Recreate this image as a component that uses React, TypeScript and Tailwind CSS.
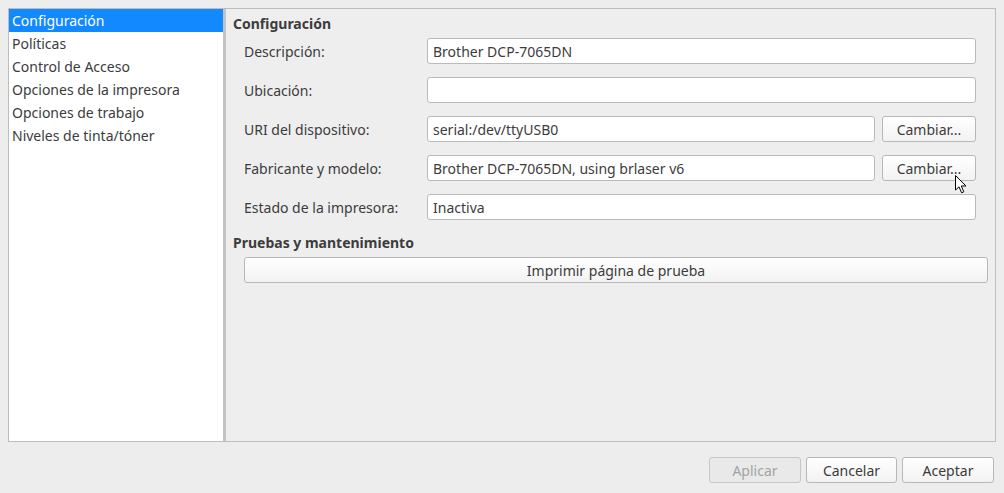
import React from 'react'

const items = [
  'Configuración',
  'Políticas',
  'Control de Acceso',
  'Opciones de la impresora',
  'Opciones de trabajo',
  'Niveles de tinta/tóner',
]

const rows = [
  { label: 'Descripción:', value: 'Brother DCP-7065DN', button: false },
  { label: 'Ubicación:', value: '', button: false },
  { label: 'URI del dispositivo:', value: 'serial:/dev/ttyUSB0', button: true },
  { label: 'Fabricante y modelo:', value: 'Brother DCP-7065DN, using brlaser v6', button: true },
  { label: 'Estado de la impresora:', value: 'Inactiva', button: false },
]

function Btn({ children, className = '', disabled = false }: { children: React.ReactNode; className?: string; disabled?: boolean }) {
  return (
    <div
      className={
        'h-[26px] flex items-center justify-center rounded-[3px] border text-[14px] ' +
        (disabled
          ? 'border-[#c6c6c6] bg-[#e9e9e9] text-[#a3a3a3] '
          : 'border-[#b7b7b7] bg-gradient-to-b from-[#ffffff] to-[#f2f2f2] text-[#3c3c3c] ') +
        className
      }
    >
      {children}
    </div>
  )
}

export default function App() {
  return (
    <div
      className="w-[1004px] h-[493px] bg-[#ededed] p-2 flex flex-col text-[#3c3c3c] relative"
      style={{ fontFamily: '"Noto Sans", "Open Sans", sans-serif' }}
    >
      <div className="h-[434px] border border-[#bdbdbd] flex">
        {/* lista */}
        <div className="w-[214px] bg-white text-[14px]">
          {items.map((t, i) => (
            <div
              key={t}
              className={
                'h-[23px] pl-[3px] flex items-center ' + (i === 0 ? 'bg-[#1289ff] text-white' : '')
              }
            >
              {t}
            </div>
          ))}
        </div>
        <div className="w-[3px] bg-[#c3c3c3]" />
        {/* panel */}
        <div className="flex-1 bg-[#eeeeee] pl-[7px] pr-[7px] pt-[4px] text-[14px]">
          <div className="h-[20px] flex items-center font-bold">Configuración</div>
          <div className="mt-[5px] pl-[11px] pr-[12px] flex flex-col gap-[13px]">
            {rows.map((r) => (
              <div key={r.label} className="flex items-center h-[26px]">
                <div className="w-[183px]">{r.label}</div>
                <div className="flex-1 h-[26px] bg-white border border-[#bababa] rounded-[3px] flex items-center pl-[5px]">
                  {r.value}
                </div>
                {r.button && <Btn className="w-[94px] ml-[7px]">Cambiar...</Btn>}
              </div>
            ))}
          </div>
          <div className="mt-[12px] h-[20px] flex items-center font-bold">Pruebas y mantenimiento</div>
          <div className="mt-[5px] pl-[11px]">
            <Btn>Imprimir página de prueba</Btn>
          </div>
        </div>
      </div>
      <div className="mt-[15px] flex justify-end gap-[5px] pr-[2px]">
        <Btn disabled className="w-[92px]">Aplicar</Btn>
        <Btn className="w-[91px]">Cancelar</Btn>
        <Btn className="w-[92px]">Aceptar</Btn>
      </div>
      {/* puntero */}
      <svg className="absolute left-[955px] top-[175px]" width="14" height="20" viewBox="0 0 14 20">
        <path d="M0.5 0.5 L0.5 15 L4 11.8 L6.6 17.8 L8.8 16.8 L6.3 11 L11 11 Z" fill="white" stroke="black" strokeWidth="1" strokeLinejoin="round" />
      </svg>
    </div>
  )
}
